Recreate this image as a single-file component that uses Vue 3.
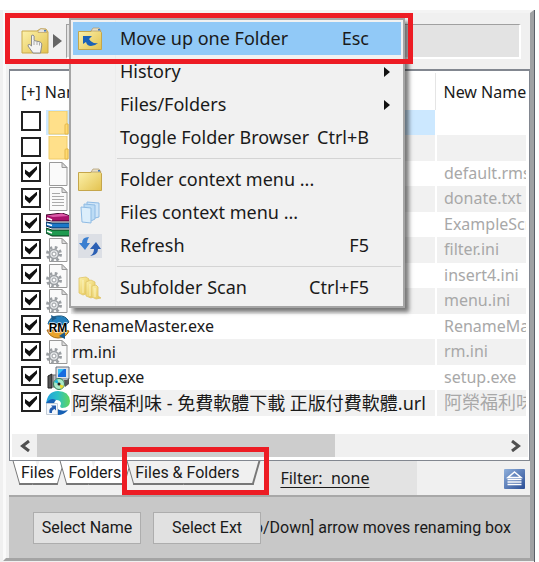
<script setup>
import { reactive, ref } from 'vue';

const menu = [
  { label: 'Move up one Folder', keys: 'Esc', icon: 'up', active: true },
  { label: 'History', sub: true },
  { label: 'Files/Folders', sub: true },
  { label: 'Toggle Folder Browser', keys: 'Ctrl+B' },
  { separator: true },
  { label: 'Folder context menu ...', icon: 'folder' },
  { label: 'Files context menu ...', icon: 'files' },
  { label: 'Refresh', keys: 'F5', icon: 'refresh' },
  { separator: true },
  { label: 'Subfolder Scan', keys: 'Ctrl+F5', icon: 'subfolders' }
];

const rows = reactive([
  { icon: 'dir', name: '', newName: '', checked: false, selected: true },
  { icon: 'dir', name: '', newName: '', checked: false },
  { icon: 'blank', name: '', newName: 'default.rms', checked: true },
  { icon: 'text', name: '', newName: 'donate.txt', checked: true },
  { icon: 'rar', name: '', newName: 'ExampleScripts.rar', checked: true },
  { icon: 'ini', name: '', newName: 'filter.ini', checked: true },
  { icon: 'ini', name: '', newName: 'insert4.ini', checked: true },
  { icon: 'ini', name: '', newName: 'menu.ini', checked: true },
  { icon: 'rm', name: 'RenameMaster.exe', newName: 'RenameMaster.exe', checked: true },
  { icon: 'ini', name: 'rm.ini', newName: 'rm.ini', checked: true },
  { icon: 'setup', name: 'setup.exe', newName: 'setup.exe', checked: true },
  {
    icon: 'edge',
    name: '阿榮福利味 - 免費軟體下載 正版付費軟體.url',
    newName: '阿榮福利味 - 免費軟體下載 正版付費軟體.url',
    checked: true,
    cjk: true
  }
]);

const tabs = ['Files', 'Folders', 'Files & Folders'];
const currentTab = ref('Files & Folders');
</script>

<template>
  <div class="screen">
    <svg class="defs" width="0" height="0" aria-hidden="true">
      <defs>
        <linearGradient id="gold" x1="0" y1="0" x2="1" y2="1">
          <stop offset="0" stop-color="#fdf3ae" />
          <stop offset="1" stop-color="#e3c24f" />
        </linearGradient>
        <linearGradient id="blue" x1="0" y1="0" x2="1" y2="1">
          <stop offset="0" stop-color="#8fb0dc" />
          <stop offset="1" stop-color="#2a4d96" />
        </linearGradient>
        <linearGradient id="sea" x1="0" y1="0" x2="1" y2="0">
          <stop offset="0" stop-color="#1f9fe0" />
          <stop offset="0.5" stop-color="#2cc0c4" />
          <stop offset="1" stop-color="#62d65a" />
        </linearGradient>
      </defs>
    </svg>

    <main class="window">
      <header class="toolbar">
        <button class="browse" aria-label="Browse">
          <svg width="28" height="26" viewBox="0 0 28 26">
            <path d="M1 3h15l3-2h6l2 3V25H1z" fill="url(#gold)" stroke="#c9a94c" />
            <path d="M17 3l3-2.500 5 1 1 3h-9z" fill="#e9e3da" stroke="#b99d62" stroke-width=".7" />
            <path d="M23 2h2v1.500h-2z" fill="#4c7db5" />
            <path d="M10.500 7.500q1.700-1.300 2.600.5v4.500l6 1.500q2 .8 1.700 3L19.500 25H12l-5-7q-.3-2 1.800-1.500l1.700 1.500z" fill="#f4f4f4" stroke="#8c8c8c" />
            <path d="M13 13v4m3-3v3m2.500-2.500v3" stroke="#aaa" fill="none" />
          </svg>
        </button>
        <svg class="drop" width="9" height="14" viewBox="0 0 9 14"><path d="M0 0l9 7-9 7z" fill="#666" /></svg>
        <input class="path" aria-label="Current folder" readonly />
      </header>

      <section class="list">
        <table>
          <colgroup><col class="c-check" /><col class="c-icon" /><col /><col class="c-new" /></colgroup>
          <thead>
            <tr>
              <th colspan="3">[+] Name</th>
              <th class="new">New Name</th>
            </tr>
          </thead>
          <tbody>
            <tr v-for="(row, i) in rows" :key="i" :class="{ selected: row.selected, cjk: row.cjk }">
              <td><input v-model="row.checked" type="checkbox" :aria-label="row.newName || 'Folder'" /></td>
              <td class="icon">
                <svg width="24" height="24" viewBox="0 0 24 24">
                  <g v-if="row.icon === 'dir'">
                    <path d="M3 0h18v13h1v10H3z" fill="#ffe08a" stroke="#f0cc66" />
                    <path d="M19 14q0-1 1-1h2v10h-3z" fill="#ffd96f" stroke="#e5b94c" />
                  </g>
                  <g v-else-if="row.icon === 'rar'">
                    <path d="M0 2L16 0l8 3v5H6L0 7z" fill="#a8136c" stroke="#3d0628" />
                    <path d="M1 2.500L16 .5l7 2.500-16 1z" fill="#dc5aa8" />
                    <path d="M0 9l6 1h18v5H6l-6-2z" fill="#1b78c8" stroke="#0b2b52" />
                    <path d="M0 15l6 2h18v6H6l-6-3z" fill="#1e9a50" stroke="#08361c" />
                    <path d="M1 5l5 2M1 11l5 1.500M1 18l5 2" stroke="#fff" stroke-width="1.500" />
                  </g>
                  <g v-else-if="row.icon === 'rm'">
                    <path d="M2 9Q4 1 12 1q8-1 11 6l-3 3z" fill="#2580bd" stroke="#16567f" />
                    <path d="M1 15q3 8 11 8 8 0 11-7l-4-1z" fill="#e9a42c" stroke="#a66c12" />
                    <path d="M5 0l6 3-5 3zm14 24l-6-3 6-4z" fill="#1d5c8c" />
                    <text x="12" y="16.500" class="rm-text" text-anchor="middle">RM</text>
                  </g>
                  <g v-else-if="row.icon === 'setup'">
                    <path d="M2 10l4-2v14H2z" fill="#555" stroke="#222" />
                    <path d="M7 9h4v12H7z" fill="#b9bcc2" stroke="#666" />
                    <path d="M10 1h13v12H10z" fill="#dfe3e9" stroke="#68717f" />
                    <path d="M12 3h8v8h-8z" fill="#176be0" />
                    <path d="M12 3h6l-6 6z" fill="#36c1f5" />
                    <circle cx="13" cy="18" r="5.500" fill="#a9e8c8" stroke="#317b55" />
                    <path d="M13 18l-5-2 3-3z" fill="#21b6d7" />
                    <path d="M13 18l5 2-3 3z" fill="#f0da29" />
                    <circle cx="13" cy="18" r="1.500" fill="#222" />
                    <path d="M18 14h3l2-2v6l-4 3z" fill="#555" />
                  </g>
                  <g v-else-if="row.icon === 'edge'">
                    <path d="M0 14Q1 0 12 0t12 10q0 7-8 7-3-1-1-4 0-4-5-4Q3 8 0 14z" fill="url(#sea)" />
                    <path d="M0 12q5-6 10-3-4 4 0 8 5 4 12 2-4 5-10 5Q0 24 0 12z" fill="#1660b4" />
                    <path d="M.5 12.500h11v11H.5z" fill="#f4f8fc" stroke="#c3ccd6" />
                    <path d="M3.500 22q-1-5 3-6L5 14.500h5v5L8.500 18q-3 1-2.500 4z" fill="#245cae" />
                  </g>
                  <g v-else>
                    <path d="M3.500.5H16l5 5v18H3.500z" fill="#fafafa" stroke="#999" />
                    <path d="M16 .5v5h5z" fill="#ddd" stroke="#999" />
                    <path v-if="row.icon === 'text'" d="M6 6.500h8M6 9.500h12M6 12.500h12M6 15.500h12M6 18.500h12" stroke="#aaa" />
                    <g v-if="row.icon === 'ini'">
                      <circle cx="8" cy="16" r="6.500" fill="none" stroke="#9b9fa3" stroke-width="3" stroke-dasharray="2.600 2.500" />
                      <circle cx="8" cy="16" r="4.500" fill="#e4e6e8" stroke="#9b9fa3" stroke-width="1.500" />
                      <circle cx="8" cy="16" r="2" fill="#fff" stroke="#9b9fa3" />
                    </g>
                  </g>
                </svg>
              </td>
              <td class="name">{{ row.name }}</td>
              <td class="new"><div>{{ row.newName }}</div></td>
            </tr>
          </tbody>
        </table>
        <div class="scrollbar">
          <button aria-label="Scroll left">
            <svg width="10" height="12" viewBox="0 0 10 12"><path d="M9 1L2.500 6 9 11" /></svg>
          </button>
          <div class="track"><div class="thumb"></div></div>
          <button aria-label="Scroll right">
            <svg width="10" height="12" viewBox="0 0 10 12"><path d="M1 1l6.500 5L1 11" /></svg>
          </button>
        </div>
      </section>

      <nav class="tabs">
        <button
          v-for="tab in tabs"
          :key="tab"
          class="tab"
          :class="{ current: tab === currentTab }"
          @click="currentTab = tab"
        >
          <span>{{ tab }}</span>
        </button>
        <div class="filter"><a href="#">Filter:&nbsp; none</a></div>
        <button class="eject" aria-label="Collapse">
          <svg width="21" height="20" viewBox="0 0 21 20">
            <rect width="21" height="20" rx="1" fill="url(#blue)" />
            <path d="M10.500 3L17 8.500H4z" fill="none" stroke="#fff" stroke-width="1.500" />
            <path d="M3.500 10.500h14M3.500 13h14M3.500 15.500h14" stroke="#fff" stroke-width="1.500" />
          </svg>
        </button>
      </nav>

      <footer class="footer">
        <button>Select Name</button>
        <button>Select Ext</button>
        <p><span>[Up/Down] arrow moves renaming box</span></p>
      </footer>
    </main>

    <div class="menu" role="menu">
      <template v-for="(item, i) in menu" :key="i">
        <hr v-if="item.separator" />
        <button v-else class="item" :class="{ active: item.active }" role="menuitem">
          <span class="item-icon">
            <svg v-if="item.icon" width="24" height="24" viewBox="0 0 24 24">
              <g v-if="item.icon === 'up' || item.icon === 'folder'">
                <path d="M.5 4.500H13l2-2h6l2.500 3v17H.5z" fill="url(#gold)" stroke="#c5a64b" />
                <path d="M13 4l2-3h6l2 3z" fill="#e8ddc4" stroke="#ad986b" stroke-width=".7" />
                <path d="M20 2h2v1.500h-2z" fill="#3f78b8" />
                <path v-if="item.icon === 'up'" d="M5 9h9l-3 3q3 5 9 4-3 3-7 3-4 0-5-4l-3 2z" fill="#1c62b7" />
              </g>
              <g v-else-if="item.icon === 'files'" stroke="#8fbbe4">
                <path d="M9 1l12 1v14l-4 1H9z" fill="#cfe5f8" />
                <path d="M6 3l11 1v14l-4 2H6z" fill="#bddcf5" />
                <path d="M3 6l10 1v15l-9-1z" fill="#dceefb" />
              </g>
              <g v-else-if="item.icon === 'refresh'">
                <path d="M0 0h24v24H0z" fill="#dcdfe5" />
                <path d="M11 3Q4 3 4 9H1l6 7 5-7H9q0-3 2-6z" fill="#3a7fd0" />
                <path d="M12 22q4-2 4-7h-4l6-7 5 7h-3q0 6-8 7z" fill="#2c60b4" />
              </g>
              <g v-else fill="url(#gold)" stroke="#e0c467" stroke-width=".8">
                <path d="M1 2l7-1 3 2v14l-6 2-4-2z" />
                <path d="M8 6l5-2 4 2v14l-4 2-5-2z" />
                <path d="M14 10l4-1 2 2v9l3 2-5 1-4-2z" />
                <path d="M5 4v13M12 8v12M17 12v9" fill="none" stroke="#fff9cf" />
              </g>
            </svg>
          </span>
          <span class="label">{{ item.label }}</span>
          <span class="keys">{{ item.keys }}</span>
          <span class="more">
            <svg v-if="item.sub" width="6" height="10" viewBox="0 0 6 10"><path d="M0 0l6 5-6 5z" fill="#111" /></svg>
          </span>
        </button>
      </template>
    </div>

    <div class="mark mark-menu"></div>
    <div class="mark mark-tab"></div>
  </div>
</template>

<style>
body {
  background: #f0f0f0;
}
</style>

<style scoped>
.screen {
  position: relative;
  box-sizing: border-box;
  padding: 10px 5px 3px 0;
  background: linear-gradient(#fff 10px, transparent 10px), linear-gradient(to left, #fff 4px, #5b6068 4px, #5b6068 5px, #f0f0f0 5px);
  color: #1a1a1a;
  font-family: "Noto Sans", "Noto Sans CJK TC", sans-serif;
  font-size: 16px;
}

.defs {
  position: absolute;
}

button {
  padding: 0;
  border: none;
  background: none;
  color: inherit;
  font: inherit;
}

svg {
  display: block;
}

.window {
  margin-left: 3px;
  padding-left: 3px;
  border-style: solid;
  border-width: 3px 4px 3px 3px;
  border-color: #f4f4f4 #a0a2a4 #a4a4a4 #fafafa;
  background: #f0f0f0;
}

.toolbar {
  display: flex;
  align-items: center;
  gap: 4px;
  height: 56px;
  padding: 0 9px 0 12px;
}

.path {
  flex: 1;
  min-width: 0;
  height: 35px;
  box-sizing: border-box;
  border: 1px solid #a0a0a0;
  border-right: 2px solid #fff;
  border-bottom: 2px solid #fff;
  background: #e3e3e3;
}

.list {
  padding: 2px 1px 3px 2px;
  border: 1px solid #828790;
  border-top-width: 2px;
  background: #fff;
}

table {
  width: 100%;
  table-layout: fixed;
  border-collapse: collapse;
}

.c-check {
  width: 34px;
}

.c-icon {
  width: 25px;
}

.c-new {
  width: 93px;
}

th {
  height: 37px;
  padding: 0 0 0 9px;
  font-weight: normal;
  text-align: left;
}

th.new {
  border-left: 1px solid #e5e5e5;
  padding-left: 8px;
}

td {
  height: 25px;
  padding: 0;
  line-height: 25px;
  white-space: nowrap;
  overflow: hidden;
}

tbody tr:nth-child(even) td {
  height: 26px;
}

td:first-child {
  padding-left: 9px;
}

td input {
  display: block;
  width: 20px;
  height: 20px;
  margin: 0 0 3px;
  box-sizing: border-box;
  appearance: none;
  border: 2px solid #222;
  background: #fff;
}

td input:checked::before {
  content: "";
  display: block;
  width: 12px;
  height: 12px;
  margin: 2px;
  background: #111;
  clip-path: polygon(0 30%, 35% 55%, 100% 0, 100% 30%, 38% 100%, 0 65%);
}

.name {
  padding-left: 1px;
}

tbody tr:nth-child(even) .name,
tbody tr:nth-child(even) .new div {
  background: #f1f1f1;
}

.selected .icon,
.selected .name {
  background: #cce8ff;
}

td.new {
  color: #a8a8a8;
}

td.new div {
  height: 100%;
  min-height: 25px;
  margin: 0 2px 0 2px;
  padding-left: 7px;
  overflow: hidden;
}

.cjk {
  font-size: 18px;
}

.rm-text {
  font: bold 12px "Liberation Sans", sans-serif;
  stroke: #fff;
  stroke-width: 1px;
  paint-order: stroke;
}

.scrollbar {
  display: flex;
  height: 23px;
  margin-top: 18px;
  background: #f0f0f0;
}

.scrollbar button {
  display: flex;
  align-items: center;
  justify-content: center;
  width: 25px;
}

.scrollbar path {
  fill: none;
  stroke: #505050;
  stroke-width: 3px;
}

.track {
  flex: 1;
}

.thumb {
  width: 64%;
  height: 100%;
  background: #cdcdcd;
}

.tabs {
  display: flex;
  align-items: flex-start;
  height: 34px;
  padding-left: 3px;
  border-bottom: 2px solid #a8a8a8;
  font-family: Roboto, sans-serif;
}

.tab {
  position: relative;
  height: 24px;
  margin-right: -6px;
  padding: 0 11px 0 9px;
  line-height: 24px;
  white-space: nowrap;
}

.tab::before,
.tab::after {
  content: "";
  position: absolute;
  top: 0;
  bottom: 0;
  box-sizing: border-box;
  border-bottom: 2px solid #777;
  background: #fff;
}

.tab::before {
  left: 4px;
  right: 50%;
  border-left: 1px solid #777;
  transform: skewX(16deg);
}

.tab::after {
  left: 45%;
  right: 4px;
  border-right: 1px solid #777;
  transform: skewX(-16deg);
}

.tab.current {
  padding-right: 22px;
}

.tab.current::before,
.tab.current::after {
  background: #f0f0f0;
}

.tab.current::after {
  border-right-width: 2px;
}

.tab span {
  position: relative;
  z-index: 1;
}

.filter {
  display: flex;
  align-items: center;
  width: 150px;
  height: 100%;
  margin-left: 12px;
  background: #e3e3e3;
  font-family: "Noto Sans", sans-serif;
}

.filter a {
  padding-left: 13px;
  color: inherit;
  text-underline-offset: 3px;
}

.eject {
  margin: 8px 5px 0 auto;
}

.footer {
  display: flex;
  align-items: center;
  gap: 12px;
  height: 61px;
  padding: 0 19px 0 24px;
  background: #c8c8c8;
  font-family: Roboto, sans-serif;
}

.footer button {
  flex: none;
  width: 108px;
  height: 32px;
  border: 1px solid #adadad;
  background: #e1e1e1;
}

.footer p {
  display: flex;
  flex: 1;
  justify-content: flex-end;
  margin: 0 0 0 -12px;
  overflow: hidden;
  white-space: nowrap;
}

.menu {
  position: absolute;
  top: 18px;
  left: 69px;
  width: 336px;
  box-sizing: border-box;
  padding: 2px;
  border: 2px solid #a5a5a5;
  background: linear-gradient(to right, transparent 44px, #ececec 44px, #ececec 45px, transparent 45px), #f1f1f1;
  box-shadow: 4px 4px 4px rgba(0, 0, 0, 0.5);
}

.menu hr {
  height: 1px;
  margin: 4px 0 4px 44px;
  border: none;
  background: #d4d4d4;
}

.item {
  display: flex;
  align-items: center;
  width: 100%;
  height: 33px;
  padding-left: 5px;
  font-size: 18px;
  line-height: 24px;
  text-align: left;
  white-space: nowrap;
}

.item.active {
  background: #91c9f7;
}

.item-icon {
  width: 42px;
}

.label,
.keys {
  padding-bottom: 2px;
}

.label {
  flex: 1;
}

.more {
  width: 32px;
}

.more svg {
  margin-left: 15px;
}

.mark {
  position: absolute;
  box-sizing: border-box;
  border: 5px solid #ed1c24;
  pointer-events: none;
}

.mark-menu {
  top: 13px;
  left: 5px;
  width: 408px;
  height: 51px;
}

.mark-tab {
  top: 447px;
  left: 122px;
  width: 147px;
  height: 48px;
}
</style>
